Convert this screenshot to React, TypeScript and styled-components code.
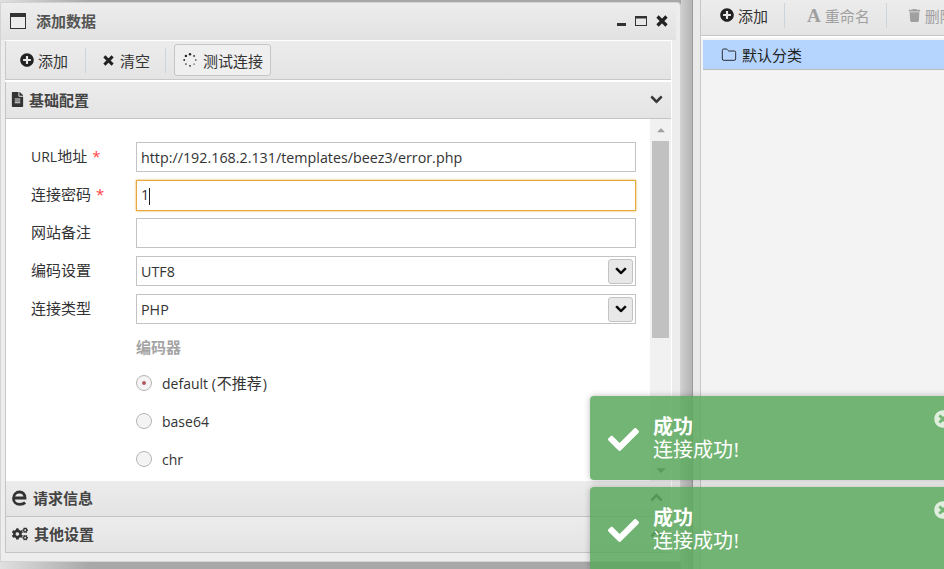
import React from "react";
import styled, { createGlobalStyle } from "styled-components";
import {
  FaCaretDown,
  FaCaretUp,
  FaCheck,
  FaChevronDown,
  FaChevronUp,
  FaCogs,
  FaFileAlt,
  FaPlusCircle,
  FaTimesCircle,
  FaTrash,
} from "react-icons/fa";
import { Folder } from "lucide-react";

const fontStack = `"Open Sans", "Noto Sans CJK SC", sans-serif`;

const GlobalStyle = createGlobalStyle`
  html, body {
    margin: 0;
    padding: 0;
    overflow: hidden;
  }
  * {
    box-sizing: border-box;
  }
`;

const Page = styled.div`
  position: relative;
  width: 944px;
  height: 569px;
  overflow: hidden;
  display: flex;
  background: #a8a8a8;
  font-family: ${fontStack};
  font-size: 15px;
  color: #333;
`;

const LeftColumn = styled.div`
  width: 681px;
  height: 569px;
  flex: none;
  padding-top: 2px;
  background: linear-gradient(90deg, #e0e0e0, #a8a8a8 90px);
`;

const Window = styled.div`
  height: 560px;
  display: flex;
  flex-direction: column;
  padding: 0 8px 8px 4px;
  background: #ededed;
  border: 1px solid #d4d4d4;
  border-top-right-radius: 4px;
`;

const TitleBar = styled.div`
  height: 37px;
  flex: none;
  display: flex;
  align-items: center;
  margin: 0 -4px;
  padding: 0 8px 2px 9px;
  background: linear-gradient(#ededed, #e2e2e2);
  color: #555;
  font-weight: 700;
  gap: 10px;
`;

const TitleText = styled.span`
  flex: 1;
  padding-bottom: 1px;
`;

const WindowButtons = styled.div`
  display: flex;
  align-items: center;
  gap: 9px;
  color: #333;
`;

const Inner = styled.div`
  flex: 1;
  display: flex;
  flex-direction: column;
  min-height: 0;
  background: #fff;
  border: 1px solid #fff;
  border-left: none;
`;

const Toolbar = styled.div`
  height: 39px;
  flex: none;
  display: flex;
  align-items: center;
  padding-left: 14px;
  background: linear-gradient(#ececec, #e4e4e4);
  border: 1px solid #c8c8c8;
  border-width: 0 0 1px 1px;
`;

const ToolItem = styled.div<{ $muted?: boolean }>`
  display: flex;
  align-items: center;
  gap: 4px;
  color: ${(p) => (p.$muted ? "#a0a0a0" : "#333")};
  svg {
    color: ${(p) => (p.$muted ? "#a0a0a0" : "#222")};
  }
`;

const ToolSep = styled.div<{ $left: number; $right: number }>`
  width: 1px;
  height: 25px;
  background: #ccd5dc;
  margin: 0 ${(p) => p.$right}px 0 ${(p) => p.$left}px;
`;

const ToolButton = styled.div`
  display: flex;
  align-items: center;
  gap: 6px;
  width: 97px;
  height: 32px;
  padding-left: 8px;
  background: #efefef;
  border: 1px solid #c6c6c6;
  border-radius: 3px;
`;

const SectionHeader = styled.div<{ $first?: boolean }>`
  height: ${(p) => (p.$first ? 37 : 36)}px;
  flex: none;
  display: flex;
  align-items: center;
  gap: 6px;
  padding: 0 8px 2px 6px;
  margin-top: ${(p) => (p.$first ? 2 : 0)}px;
  background: linear-gradient(#ececec, #e4e4e4);
  border: 1px solid #c4c4c4;
  border-width: 0 0 1px 1px;
  color: #444;
  font-weight: 700;
  svg {
    color: #333;
  }
`;

const SectionTitle = styled.span`
  flex: 1;
`;

const FileIcon = styled(FaFileAlt)`
  margin: 0 -2px;
`;

const SectionBody = styled.div`
  height: 362px;
  flex: none;
  display: flex;
  background: #fff;
  border-left: 1px solid #c8c8c8;
`;

const Form = styled.div`
  flex: 1;
  padding: 23px 0 0 25px;
  display: flex;
  flex-direction: column;
  gap: 8px;
`;

const Row = styled.div`
  display: flex;
  align-items: center;
  height: 30px;
`;

const Label = styled.div`
  width: 105px;
  padding-bottom: 4px;
  color: #333;
`;

const Latin = styled.span`
  font-size: 14px;
`;

const Cjk = styled.span`
  font-size: 15px;
  margin: 0 1px;
`;

const Star = styled.span`
  color: #f44;
  margin-left: 5px;
`;

const Field = styled.div<{ $focus?: boolean }>`
  width: 500px;
  height: ${(p) => (p.$focus ? 31 : 30)}px;
  display: flex;
  align-items: center;
  padding: 0 2px 0 4px;
  background: #fff;
  border: 1px solid ${(p) => (p.$focus ? "#e5a93c" : "#c3c3c3")};
  box-shadow: ${(p) => (p.$focus ? "0 0 2px #e5a93c" : "none")};
  color: #333;
  font-size: 14.3px;
`;

const FieldText = styled.span`
  flex: 1;
`;

const Caret = styled.span`
  display: inline-block;
  width: 1px;
  height: 17px;
  background: #222;
  vertical-align: middle;
`;

const SelectArrow = styled.div`
  width: 25px;
  height: 25px;
  display: flex;
  align-items: center;
  justify-content: center;
  background: #e8e8e8;
  border: 1px solid #c3c3c3;
  border-radius: 3px;
  color: #000;
`;

const GroupLabel = styled.div`
  margin: 4px 0 0 105px;
  color: #a4a4a4;
  font-weight: 700;
  height: 22px;
`;

const RadioRow = styled.div`
  display: flex;
  align-items: center;
  gap: 10px;
  height: 30px;
  margin-left: 105px;
  font-size: 14px;
  line-height: 20px;
  position: relative;
  top: 2px;
`;

const RadioText = styled.span`
  padding-top: 1px;
`;

const Radio = styled.span<{ $checked?: boolean }>`
  width: 16px;
  height: 16px;
  border-radius: 50%;
  border: 1px solid #b5b5b5;
  background: #f4f4f4;
  display: flex;
  align-items: center;
  justify-content: center;
  &::after {
    content: "";
    width: 4px;
    height: 4px;
    border-radius: 50%;
    background: ${(p) => (p.$checked ? "#b05a5a" : "transparent")};
  }
`;

const Scrollbar = styled.div`
  width: 21px;
  flex: none;
  display: flex;
  flex-direction: column;
  align-items: center;
  background: #f1f1f1;
  color: #a0a0a0;
`;

const ScrollArrow = styled.div<{ $down?: boolean }>`
  height: 22px;
  display: flex;
  align-items: center;
  justify-content: center;
  flex: none;
  color: ${(p) => (p.$down ? "#555" : "#a0a0a0")};
`;

const ScrollThumb = styled.div`
  width: 17px;
  height: 197px;
  flex: none;
  background: #c1c1c1;
`;

const ScrollTrack = styled.div`
  flex: 1;
`;

const Gutter = styled.div`
  width: 19px;
  flex: none;
  display: flex;
`;

const GutterDark = styled.div`
  width: 12px;
  background: linear-gradient(90deg, #cfcfcf, #b4b4b4);
  border-right: 1px solid #9c9c9c;
`;

const GutterLight = styled.div`
  flex: 1;
  background: #eaeaea;
`;

const RightPanel = styled.div`
  flex: 1;
  display: flex;
  flex-direction: column;
  background: #f3f3f3;
  border-left: 1px solid #c8c8c8;
`;

const RightToolbar = styled.div`
  height: 36px;
  flex: none;
  display: flex;
  align-items: center;
  padding: 0 0 5px 19px;
  white-space: nowrap;
  overflow: hidden;
  background: linear-gradient(#ececec, #e4e4e4);
  border-bottom: 1px solid #c8c8c8;
  box-shadow: 0 2px 0 #fff;
`;

const SerifA = styled.span`
  font-family: "Liberation Serif", serif;
  font-weight: 700;
  font-size: 19px;
  line-height: 1;
  color: #a0a0a0;
`;

const TreeRow = styled.div`
  height: 30px;
  flex: none;
  margin: 4px 0 0 2px;
  display: flex;
  align-items: center;
  gap: 5px;
  padding-left: 18px;
  background: #b5d5ff;
  border-bottom: 1px solid #bbb;
  color: #222;
`;

const Toast = styled.div<{ $top: number }>`
  position: absolute;
  left: 590px;
  top: ${(p) => p.$top}px;
  width: 370px;
  height: 84px;
  display: flex;
  align-items: center;
  padding: 2px 0 0 18px;
  gap: 14px;
  border-radius: 4px;
  background: rgba(90, 168, 92, 0.85);
  box-shadow: 0 0 6px rgba(0, 0, 0, 0.25);
  color: #fff;
  font-family: "Liberation Serif", "Noto Sans CJK SC", serif;
  font-size: 20px;
  line-height: 23px;
`;

const ToastTitle = styled.div`
  font-weight: 700;
`;

const ToastClose = styled.div`
  position: absolute;
  left: 344px;
  top: 14px;
  color: #dfeedd;
`;

const Icon = styled.span`
  display: inline-flex;
  flex: none;
`;

const CrossGap = styled.span`
  display: inline-flex;
  margin-right: 2px;
`;

const WindowIcon = () => (
  <svg width="16" height="16" viewBox="0 0 16 16">
    <rect x="0.5" y="0.5" width="15" height="15" fill="#ececec" stroke="#333" />
    <rect x="0" y="0" width="16" height="4" fill="#333" />
  </svg>
);

const MinimizeIcon = () => (
  <svg width="9" height="12" viewBox="0 0 9 12">
    <rect x="0" y="8" width="9" height="3" fill="#333" />
  </svg>
);

const MaximizeIcon = () => (
  <svg width="12" height="12" viewBox="0 0 12 12">
    <rect x="0.5" y="1.5" width="11" height="9" fill="none" stroke="#333" />
    <rect x="0" y="1" width="12" height="2.5" fill="#333" />
  </svg>
);

const CrossIcon = ({ size = 12, weight = 3.2 }: { size?: number; weight?: number }) => (
  <svg width={size} height={size} viewBox="0 0 12 12">
    <path d="M1.5 1.5 L10.5 10.5 M10.5 1.5 L1.5 10.5" stroke="#222" strokeWidth={weight} fill="none" />
  </svg>
);

const DotsSpinner = () => (
  <svg width="14" height="14" viewBox="0 0 14 14" fill="#222">
    <circle cx="7" cy="1.3" r="1.2" />
    <circle cx="11.1" cy="2.9" r="0.9" />
    <circle cx="12.8" cy="7" r="0.8" />
    <circle cx="11.1" cy="11.1" r="0.7" />
    <circle cx="7" cy="12.8" r="0.9" />
    <circle cx="2.9" cy="11.1" r="0.8" />
    <circle cx="1.2" cy="7" r="0.9" />
    <circle cx="2.9" cy="2.9" r="1.2" />
  </svg>
);

const EdgeIcon = () => (
  <svg width="15" height="16" viewBox="0 0 15 16">
    <path
      d="M1.6 8 H13 C13 4.2 10.6 2 7.6 2 C4 2 1.5 4.8 1.5 8.4 C1.5 12 4.2 14.4 7.8 14.4 C10 14.4 11.8 13.8 13.2 12.6"
      fill="none"
      stroke="#333"
      strokeWidth="2.8"
    />
  </svg>
);

const ToastMessage = ({ top }: { top: number }) => (
  <Toast $top={top}>
    <Icon>
      <FaCheck size={31} />
    </Icon>
    <div>
      <ToastTitle>成功</ToastTitle>
      <div>连接成功!</div>
    </div>
    <ToastClose>
      <FaTimesCircle size={18} />
    </ToastClose>
  </Toast>
);

export default function App() {
  return (
    <Page>
      <GlobalStyle />
      <LeftColumn>
        <Window>
          <TitleBar>
            <WindowIcon />
            <TitleText>添加数据</TitleText>
            <WindowButtons>
              <MinimizeIcon />
              <MaximizeIcon />
              <CrossIcon />
            </WindowButtons>
          </TitleBar>
          <Inner>
            <Toolbar>
              <ToolItem>
                <FaPlusCircle size={14} />
                添加
              </ToolItem>
              <ToolSep $left={17} $right={17} />
              <ToolItem>
                <CrossGap>
                  <CrossIcon size={11} />
                </CrossGap>
                清空
              </ToolItem>
              <ToolSep $left={15} $right={8} />
              <ToolButton>
                <DotsSpinner />
                测试连接
              </ToolButton>
            </Toolbar>
            <SectionHeader $first>
              <FileIcon size={15} />
              <SectionTitle>基础配置</SectionTitle>
              <FaChevronDown size={13} stroke="currentColor" strokeWidth={30} />
            </SectionHeader>
            <SectionBody>
              <Form>
                <Row>
                  <Label>
                    <Latin>URL</Latin>地址<Star>*</Star>
                  </Label>
                  <Field>
                    <FieldText>http://192.168.2.131/templates/beez3/error.php</FieldText>
                  </Field>
                </Row>
                <Row>
                  <Label>
                    连接密码<Star>*</Star>
                  </Label>
                  <Field $focus>
                    <FieldText>
                      1<Caret />
                    </FieldText>
                  </Field>
                </Row>
                <Row>
                  <Label>网站备注</Label>
                  <Field />
                </Row>
                <Row>
                  <Label>编码设置</Label>
                  <Field>
                    <FieldText>UTF8</FieldText>
                    <SelectArrow>
                      <FaChevronDown size={12} stroke="currentColor" strokeWidth={30} />
                    </SelectArrow>
                  </Field>
                </Row>
                <Row>
                  <Label>连接类型</Label>
                  <Field>
                    <FieldText>PHP</FieldText>
                    <SelectArrow>
                      <FaChevronDown size={12} stroke="currentColor" strokeWidth={30} />
                    </SelectArrow>
                  </Field>
                </Row>
                <GroupLabel>编码器</GroupLabel>
                <RadioRow>
                  <Radio $checked />
                  <span>
                    default (<Cjk>不推荐</Cjk>)
                  </span>
                </RadioRow>
                <RadioRow>
                  <Radio />
                  <RadioText>base64</RadioText>
                </RadioRow>
                <RadioRow>
                  <Radio />
                  <RadioText>chr</RadioText>
                </RadioRow>
              </Form>
              <Scrollbar>
                <ScrollArrow>
                  <FaCaretUp size={12} />
                </ScrollArrow>
                <ScrollThumb />
                <ScrollTrack />
                <ScrollArrow $down>
                  <FaCaretDown size={14} />
                </ScrollArrow>
              </Scrollbar>
            </SectionBody>
            <SectionHeader>
              <EdgeIcon />
              <SectionTitle>请求信息</SectionTitle>
              <FaChevronUp size={13} stroke="currentColor" strokeWidth={30} />
            </SectionHeader>
            <SectionHeader>
              <FaCogs size={16} />
              <SectionTitle>其他设置</SectionTitle>
              <FaChevronUp size={13} stroke="currentColor" strokeWidth={30} />
            </SectionHeader>
          </Inner>
        </Window>
      </LeftColumn>
      <Gutter>
        <GutterDark />
        <GutterLight />
      </Gutter>
      <RightPanel>
        <RightToolbar>
          <ToolItem>
            <FaPlusCircle size={14} />
            添加
          </ToolItem>
          <ToolSep $left={16} $right={22} />
          <ToolItem $muted>
            <SerifA>A</SerifA>
            重命名
          </ToolItem>
          <ToolSep $left={16} $right={21} />
          <ToolItem $muted>
            <FaTrash size={13} />
            删除
          </ToolItem>
        </RightToolbar>
        <TreeRow>
          <Folder size={16} strokeWidth={1.4} />
          默认分类
        </TreeRow>
      </RightPanel>
      <ToastMessage top={396} />
      <ToastMessage top={487} />
    </Page>
  );
}
